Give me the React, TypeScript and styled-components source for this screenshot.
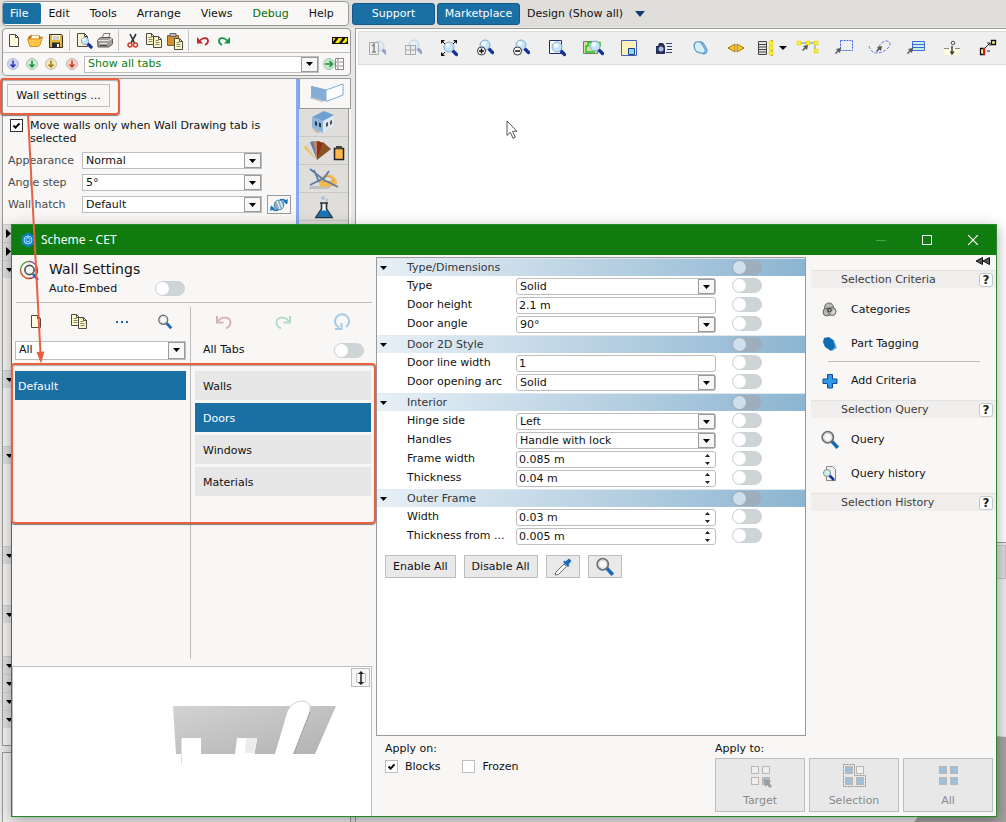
import React, { ReactNode, useId } from 'react';
import styled, { createGlobalStyle } from 'styled-components';

const blue = '#1a6fa5';
const orange = '#e8603f';
const surface = '#f8f7f6';
const line = '#bdbdbd';
const frame = '#9a9a9a';

const GlobalStyle = createGlobalStyle`
  * { box-sizing: border-box; }
  body {
    margin: 0;
    background: #e9e8e6;
    color: #111;
    font: 11px/14px "DejaVu Sans", Verdana, sans-serif;
  }
  button, input, select { font: inherit; color: inherit; margin: 0; padding: 0; border: 0; background: none; }
  svg { display: block; flex: none; }
`;

/* ---------- application shell ---------- */

const Shell = styled.div`
  position: relative;
  display: flex;
  flex-direction: column;
  min-height: 100vh;
  overflow: hidden;
`;

const TopBar = styled.header`
  display: flex;
  align-items: center;
  gap: 2px;
  height: 27px;
  padding-left: 2px;
  background: #dfdedb;
`;

const MenuBar = styled.nav`
  display: flex;
  width: 347px;
  height: 25px;
  margin-right: 1px;
  padding: 1px 0;
  border: 1px solid ${frame};
  border-radius: 4px;
  background: ${surface};
`;

const MenuItem = styled.button<{ $active?: boolean; $debug?: boolean }>`
  padding: 0 13px 0 7px;
  border-radius: 2px;
  background: ${p => (p.$active ? blue : 'transparent')};
  color: ${p => (p.$active ? '#fff' : p.$debug ? '#0a6b0a' : '#111')};
`;

const TopButton = styled.button`
  width: 83px;
  height: 22px;
  border: 1px solid #135a8a;
  border-radius: 3px;
  background: ${blue};
  color: #fff;
`;

const DesignPick = styled.button`
  display: flex;
  align-items: center;
  gap: 12px;
  margin-left: 5px;
`;

const Workspace = styled.main`
  flex: 1;
  display: grid;
  grid-template-columns: 349px 1fr;
  gap: 4px;
  padding: 1px 0 0 2px;
`;

const LeftColumn = styled.div`
  display: flex;
  flex-direction: column;
`;

const ToolPanel = styled.div`
  border: 1px solid ${frame};
  border-radius: 4px;
  background: ${surface};
`;

const ToolRow = styled.div<{ $divided?: boolean }>`
  display: flex;
  align-items: center;
  gap: 1px;
  height: 23px;
  padding: 0 2px 0 1px;
  border-top: ${p => (p.$divided ? `1px solid ${line}` : '0')};
`;

const ToolButton = styled.button<{ $w?: number }>`
  display: flex;
  align-items: center;
  justify-content: center;
  width: ${p => p.$w ?? 20}px;
  height: 20px;
`;

const ToolSeparator = styled.span`
  width: 1px;
  height: 21px;
  margin: 0 3px 0 2px;
  background: #c4c4c4;
`;

const Spring = styled.span`
  flex: 1;
`;

const Palette = styled.section`
  display: flex;
  height: 668px;
  margin-top: 2px;
  border: 1px solid ${frame};
  border-right: 0;
  background: ${surface};
`;

const PaletteBody = styled.div`
  flex: 1;
  display: flex;
  flex-direction: column;
  padding-top: 5px;
`;

const WallButton = styled.button`
  width: 103px;
  height: 23px;
  margin-left: 4px;
  border: 1px solid ${line};
  background: ${surface};
`;

const PaletteCheck = styled.div`
  margin: 12px 20px 7px 7px;
  line-height: 13px;
`;

const PaletteRow = styled.div`
  display: flex;
  align-items: center;
  height: 17px;
  margin: 0 0 5px 5px;
`;

const PaletteLabel = styled.label`
  width: 74px;
  color: #4a4a4a;
`;

const HatchButton = styled.button`
  display: flex;
  align-items: center;
  justify-content: center;
  width: 24px;
  height: 19px;
  margin-left: 5px;
  border: 1px solid ${frame};
`;

const Sections = styled.div`
  margin-top: 6px;
`;

const PaletteSection = styled.div<{ $h: number }>`
  height: ${p => p.$h}px;
`;

const SectionHead = styled.button`
  display: flex;
  align-items: center;
  width: 100%;
  height: 18px;
  padding-left: 3px;
  border-top: 1px solid #cfcfcf;
  background: #e2e1e0;
`;

const BlueEdge = styled.div`
  width: 3px;
  background: #84a9f5;
`;

const TabStrip = styled.div`
  width: 52px;
  display: flex;
  flex-direction: column;
  background: linear-gradient(90deg, #dfdedb 49px, ${frame} 49px, ${frame} 50px, ${surface} 50px);
`;

const StripTab = styled.button<{ $active?: boolean }>`
  display: flex;
  align-items: center;
  justify-content: center;
  height: ${p => (p.$active ? 30 : 28)}px;
  margin-right: ${p => (p.$active ? 0 : 3)}px;
  border: ${p => (p.$active ? `1px solid ${frame}` : '0')};
  border-top: 0;
  border-bottom: 1px solid ${p => (p.$active ? frame : '#c8c8c5')};
  background: ${p => (p.$active ? surface : 'transparent')};
`;

const BottomPanel = styled.div`
  flex: 1;
  margin-top: 6px;
  border: 1px solid ${frame};
  border-bottom: 0;
  background: #f4f4f3;
`;

const RightColumn = styled.div`
  display: flex;
  flex-direction: column;
  min-width: 0;
`;

const Viewport = styled.section`
  position: relative;
  flex: 1;
  padding: 2px 0 0 2px;
  border: solid ${frame};
  border-width: 1px 0 0 1px;
  background: #fff;
`;

const LowerViewport = styled.section`
  display: flex;
  flex-direction: column;
  height: 280px;
  border: solid ${frame};
  border-width: 1px 0 0 1px;
  background: #ececec;
`;

const ViewTools = styled.div`
  display: flex;
  align-items: center;
  height: 34px;
  border: 1px solid #dcdcdc;
  border-right: 0;
  background: #efefef;
  overflow: hidden;
`;

const LowerTools = styled.div`
  height: 34px;
  margin: 2px 0 0 2px;
  border: 1px solid #c4c4c4;
  background: #dcdcdc;
`;

const Floor = styled.svg`
  align-self: flex-end;
  margin-top: auto;
`;

const Pointer = styled.svg`
  position: absolute;
  left: 150px;
  top: 91px;
`;

/* ---------- shared controls ---------- */

const SelectFrame = styled.span<{ $h: number; $w?: number; $round?: boolean }>`
  position: relative;
  display: flex;
  flex: ${p => (p.$w ? 'none' : '1')};
  width: ${p => (p.$w ? `${p.$w}px` : 'auto')};
  height: ${p => p.$h}px;
  min-width: 0;
  border: 1px solid ${line};
  border-radius: ${p => (p.$round ? 3 : 0)}px;
  background: #fff;
`;

const NativeSelect = styled.select<{ $green?: boolean }>`
  flex: 1;
  min-width: 0;
  padding: 0 20px 0 3px;
  appearance: none;
  outline: none;
  color: ${p => (p.$green ? '#0b7d0b' : '#111')};
`;

const ArrowBox = styled.span`
  position: absolute;
  top: 0;
  right: 0;
  bottom: 0;
  display: flex;
  align-items: center;
  justify-content: center;
  width: 17px;
  border: 1px solid ${frame};
  background: ${surface};
  pointer-events: none;
`;

const Caret = ({ dir = 'down', color = '#000', w = 7, h = 4 }: { dir?: 'down' | 'right'; color?: string; w?: number; h?: number }) =>
  dir === 'down' ? (
    <svg width={w} height={h} viewBox="0 0 7 4" preserveAspectRatio="none"><path d="M0 0h7L3.500 4z" fill={color} /></svg>
  ) : (
    <svg width="5" height="9" viewBox="0 0 5 9"><path d="M0 0l5 4.500L0 9z" fill={color} /></svg>
  );

type PickProps = { id?: string; value: string; h?: number; w?: number; round?: boolean; green?: boolean; label?: string };
const Pick = ({ id, value, h = 17, w, round, green, label }: PickProps) => (
  <SelectFrame $h={h} $w={w} $round={round}>
    <NativeSelect id={id} $green={green} aria-label={label} defaultValue={value}>
      <option>{value}</option>
    </NativeSelect>
    <ArrowBox><Caret /></ArrowBox>
  </SelectFrame>
);

const CheckLabel = styled.label`
  display: flex;
  gap: 7px;
`;

const CheckFrame = styled.span`
  position: relative;
  width: 13px;
  height: 13px;
  flex: none;
  svg { position: absolute; left: 3px; top: 3px; display: none; pointer-events: none; }
  input:checked + svg { display: block; }
`;

const CheckInput = styled.input<{ $dark?: boolean }>`
  display: block;
  width: 13px;
  height: 13px;
  appearance: none;
  border: 1px solid ${p => (p.$dark ? '#333' : line)};
  background: #fff;
`;

const Check = ({ children, on, dark }: { children: ReactNode; on?: boolean; dark?: boolean }) => (
  <CheckLabel>
    <CheckFrame>
      <CheckInput type="checkbox" defaultChecked={on} $dark={dark} />
      <svg width="7" height="7" viewBox="0 0 7 7"><path d="M.5 3.500L2.600 5.600 6.500 1.300" fill="none" stroke="#000" strokeWidth="2" /></svg>
    </CheckFrame>
    <span>{children}</span>
  </CheckLabel>
);

const Toggle = styled.input.attrs({ type: 'checkbox', role: 'switch' })<{ $faded?: boolean }>`
  width: 30px;
  height: 15px;
  flex: none;
  appearance: none;
  border-radius: 8px;
  border: 1px solid ${p => (p.$faded ? 'transparent' : '#cdd2d5')};
  background: ${p => (p.$faded ? 'rgba(160, 170, 180, .75)' : '#cfd4d7')};
  &::before {
    content: '';
    display: block;
    width: 13px;
    height: 13px;
    border-radius: 50%;
    background: ${p => (p.$faded ? '#cfe0ec' : '#fff')};
  }
  &:checked::before { margin-left: 15px; }
`;

/* ---------- icons ---------- */

const Svg = ({ w = 18, h = 18, children, vb }: { w?: number; h?: number; children: ReactNode; vb?: string }) => (
  <svg width={w} height={h} viewBox={vb ?? `0 0 ${w} ${h}`} fill="none" aria-hidden="true">{children}</svg>
);

const Lens = ({ x = 9, y = 7, r = 5, faded }: { x?: number; y?: number; r?: number; faded?: boolean }) => (
  <g opacity={faded ? 0.4 : 1}>
    <path d={`M${x + r * 0.8} ${y + r * 0.8}L${x + r + 2.5} ${y + r + 2.5}`} stroke="#16309a" strokeWidth="3.200" strokeLinecap="round" />
    <circle cx={x} cy={y} r={r} fill="#c3e4fa" stroke="#8fabc9" />
    <circle cx={x - 1} cy={y - 1.5} r={r * 0.45} fill="#f2fbff" />
  </g>
);

const PageShape = ({ x, y, w = 9, h = 12, c = '#fdfbdf' }: { x: number; y: number; w?: number; h?: number; c?: string }) => (
  <path d={`M${x} ${y}h${w - 3}l3 3v${h - 3}h${-w}zM${x + w - 3} ${y}v3h3`} fill={c} stroke="#4c4a3e" />
);

const TextPage = ({ x, y }: { x: number; y: number }) => (
  <g>
    <PageShape x={x} y={y} w={8} h={11} c="#fbf7c8" />
    <path d={`M${x + 2} ${y + 4}h3M${x + 2} ${y + 6}h4M${x + 2} ${y + 8}h4`} stroke="#8c8867" />
  </g>
);

const NewIcon = () => <Svg><PageShape x={4.5} y={2.5} w={9} h={12} /></Svg>;
const CopyIcon = () => <Svg><TextPage x={1.5} y={1.5} /><TextPage x={8.5} y={4.5} /></Svg>;
const OpenIcon = () => (
  <Svg>
    <path d="M2 5l3-2h8l2 2v7l-3 2H4z" fill="#b9741a" />
    <path d="M1.500 7h12l3-2-2.500 8-2 1.500H4z" fill="#ffc64a" stroke="#d78f1d" />
    <path d="M6 3.500h7v3H5z" fill="#fdf6dd" />
  </Svg>
);
const SaveIcon = () => (
  <Svg>
    <path d="M2.500 2.500h12l1 1v12h-13z" fill="#dfb53c" stroke="#3d3217" />
    <path d="M5 3h8v5H5z" fill="#fbf8ea" /><path d="M6 5h6M6 7h6" stroke="#aaa" />
    <path d="M5 10.500h8v5H5z" fill="#2b2b33" /><path d="M10 12h2v3h-2z" fill="#fff" />
  </Svg>
);
const PreviewIcon = () => <Svg><PageShape x={2.5} y={1.5} w={10} h={13} c="#f8f4cd" /><Lens x={10} y={9} r={3.6} /></Svg>;
const PrintIcon = () => (
  <Svg>
    <path d="M6 6l2-4.500h6L12.500 6z" fill="#f2f2f2" stroke="#777" />
    <path d="M1.500 8l3-2.500h10l2 1.500v5L13 15H2z" fill="#a3a09b" stroke="#615e59" />
    <path d="M2 8.500h10.500l3.500-2M4 11.500h7" stroke="#e8e6e2" /><path d="M4 13.500h7" stroke="#4c4945" />
  </Svg>
);
const CutIcon = () => (
  <Svg>
    <path d="M6 2l4.500 9M12 2L7 11" stroke="#333" strokeWidth="1.600" />
    <circle cx="6" cy="13" r="2" stroke="#d23d2c" strokeWidth="1.500" /><circle cx="11.500" cy="13" r="2" stroke="#d23d2c" strokeWidth="1.500" />
  </Svg>
);
const PasteIcon = () => (
  <Svg>
    <path d="M1.500 3.500h11v10h-11z" fill="#d78f2c" stroke="#8a5a1a" /><path d="M4 1.500h6v3H4z" fill="#bbb" stroke="#666" />
    <TextPage x={8.5} y={6.5} />
  </Svg>
);
const UndoIcon = () => (
  <Svg w={14} h={12}>
    <path d="M4 5.500C7 2 12 2.500 12 6c0 2-1 3-3 4" stroke="#c0282d" strokeWidth="1.800" />
    <path d="M1 2v6.500h6z" fill="#c0282d" />
  </Svg>
);
const RedoIcon = () => (
  <Svg w={14} h={12}>
    <path d="M10 5.500C7 2 2 2.500 2 6c0 2 1 3 3 4" stroke="#159447" strokeWidth="1.800" />
    <path d="M13 2v6.500H7z" fill="#159447" />
  </Svg>
);
const SoftUndoIcon = () => (
  <Svg><path d="M3.500 8C6 3 15.500 3.500 15.500 9.500c0 3-1.500 4.500-4.500 6" stroke="#d8b0b2" strokeWidth="1.800" /><path d="M2 3v6.500h6.500" stroke="#d8b0b2" strokeWidth="2" /></Svg>
);
const SoftRedoIcon = () => (
  <Svg><path d="M14.500 8C12 3 2.500 3.500 2.500 9.500c0 3 1.500 4.500 4.500 6" stroke="#b0dcc3" strokeWidth="1.800" /><path d="M16 3v6.500H9.500" stroke="#b0dcc3" strokeWidth="2" /></Svg>
);
const ResetIcon = () => (
  <Svg>
    <path d="M6 14.500a7 7 0 1 1 7-.5" stroke="#a4cae8" strokeWidth="2" /><path d="M2 16h6.500V10" stroke="#a4cae8" strokeWidth="2" />
  </Svg>
);
const HazardIcon = () => (
  <Svg w={16} h={7}>
    <path d="M0 0h16v7H0z" fill="#111" /><path d="M3 6l3.500-5h4L7 6zM10 6l3.500-5H15v3l-1.500 2zM1 1h2.500L1 5z" fill="#ffe600" />
  </Svg>
);
const DownBall = ({ c, l }: { c: string; l: string }) => (
  <Svg w={14} h={14}>
    <circle cx="7" cy="7" r="5.500" fill={l} stroke="#bbb" />
    <path d="M7 3.500v6M4.500 7.500L7 10l2.500-2.500" stroke={c} strokeWidth="1.500" />
  </Svg>
);
const ListGoIcon = () => (
  <Svg w={22} h={14}>
    <circle cx="6" cy="7" r="5.500" fill="#c4ebcc" stroke="#a9c9b0" /><path d="M2 7h7M6.500 4L9.500 7l-3 3" stroke="#268c3c" strokeWidth="1.500" />
    <path d="M12.500 1.500h8v11h-8zM12.500 5h8M12.500 9h8" fill="#fff" stroke="#8088a8" /><path d="M14 3h2M14 7h2M14 11h2" stroke="#e0642c" />
  </Svg>
);
const MagIcon = ({ size = 18 }: { size?: number }) => (
  <Svg w={size} h={size} vb="0 0 18 18">
    <path d="M10.500 10l5.500 6" stroke="#1a68b8" strokeWidth="3.200" />
    <circle cx="7" cy="6.500" r="5" fill="#fbfbfb" stroke="#6c6f73" strokeWidth="1.600" />
    <circle cx="7" cy="6.500" r="3.500" stroke="#d6d9db" />
  </Svg>
);
const RingIcon = () => (
  <Svg w={22} h={22}>
    <path d="M10 1.500a8.500 8.500 0 0 1 8.500 8.500" stroke="#8a4b9c" strokeWidth="1.500" />
    <path d="M18.500 10a8.500 8.500 0 0 1-8.500 8.500" stroke="#b5304a" strokeWidth="1.500" />
    <path d="M10 18.500A8.500 8.500 0 0 1 1.500 10" stroke="#d3562f" strokeWidth="1.500" />
    <path d="M1.500 10A8.500 8.500 0 0 1 10 1.500" stroke="#5d9e45" strokeWidth="1.500" />
    <path d="M14 14l5 6" stroke="#1a68b8" strokeWidth="2.500" />
    <circle cx="10.500" cy="10" r="4.600" fill="#f4f4f4" stroke="#55585c" strokeWidth="1.700" />
  </Svg>
);
const LogoIcon = () => (
  <Svg w={14} h={16}>
    <path d="M7 .5l6.500 3.700v7.600L7 15.500.5 11.800V4.200z" fill="#0d7fc6" />
    <circle cx="7" cy="8" r="4" stroke="#a9dcf7" /><path d="M7 4v3M7 9l-3 2M7 9l3 2M5 6.500l2-1 2 1v2.500l-2 1-2-1z" stroke="#a9dcf7" strokeWidth=".8" />
  </Svg>
);
const HatchIcon = () => (
  <Svg w={20} h={16}>
    <circle cx="10" cy="8" r="4.800" fill="#8ab0cc" stroke="#5a7e98" /><path d="M8 4l3 8M11 3.500l2.500 7" stroke="#e4eef5" strokeWidth="1.300" />
    <path d="M2 10c1 3 4 4 7 3M18 6c-1-3-4-4-7-3" stroke="#1777be" strokeWidth="1.800" />
    <path d="M1 14l1-5.500 4 3zM19 2l-1 5.500-4-3z" fill="#1777be" />
  </Svg>
);
const WallIcon = () => (
  <Svg w={38} h={22}>
    <path d="M3 15l6-3 10 6-3 1z" fill="#c2c2c2" />
    <path d="M5 3l15 4v11L5 14z" fill="#86add6" /><path d="M5.500 3.500L20 7l17-6v11l-17 6.500V7" fill="#fff" stroke="#7fa9d2" />
    <path d="M5 3l15 4v11L5 14z" fill="#86add6" />
  </Svg>
);
const HouseIcon = () => (
  <Svg w={30} h={26}>
    <path d="M2 17l6 6 14-4z" fill="#b5b5b5" />
    <path d="M3 7l12-6 10 4v11l-11 7-11-6z" fill="#dce9f5" /><path d="M3 7l12-6 10 4-11 6z" fill="#6f9fcf" />
    <path d="M3 7l11 4v12L3 17z" fill="#8fb4da" />
    <path d="M6 11l2 1v4l-2-1zM10 12.500l2 1v4l-2-1z" fill="#33383f" /><path d="M17 13l2-1v4l-2 1zM21 11l2-1v4l-2 1z" fill="#555" />
  </Svg>
);
const SwatchIcon = () => (
  <Svg w={42} h={22}>
    <path d="M14 20L0 8l3-3z" fill="#e3c77a" /><path d="M14 20L3 5l4-3z" fill="#d9d9dc" /><path d="M14 20L7 2l4-1z" fill="#667aa6" />
    <path d="M14 20L10 1h7z" fill="#b08a6a" /><path d="M14 20L14 1l7 2z" fill="#9a2a18" /><path d="M14 20L20 2l8 7z" fill="#8a5326" />
    <path d="M31.500 8.500h9v11h-9z" fill="#ffb648" stroke="#222" strokeWidth="1.500" /><path d="M33 6h6v3h-6z" fill="#444" />
  </Svg>
);
const DraftIcon = () => (
  <Svg w={32} h={22}>
    <path d="M2 18h22l-4 3H1z" fill="#bfbfbd" />
    <path d="M11 16a9 9 0 1 1 18-1l-1 3-15 1z" fill="#f2b950" /><path d="M15 14a5 5 0 0 1 10-1z" fill="#dfdedb" stroke="#d69b33" />
    <path d="M2 1l14 11 14 7M2 17l14-7 5-7M6 2l5 12" stroke="#5d7bab" strokeWidth="1.800" />
  </Svg>
);
const FlaskIcon = () => (
  <Svg w={20} h={24}>
    <circle cx="9" cy="3" r="2" fill="#b3c3d6" /><circle cx="13" cy="5" r="1.500" fill="#b3c3d6" />
    <path d="M6 8h8M7.500 8v6L2 22.500h16L12.500 14V8" fill="#eef2f5" stroke="#2b3138" strokeWidth="1.600" />
    <path d="M6.500 15.500h7L17 22H3z" fill="#1b74b8" />
  </Svg>
);
const ArrowTip = ({ x = 0, y = 0 }: { x?: number; y?: number }) => (
  <path transform={`translate(${x} ${y})`} d="M6 0L1 1l1.500 1.500L0 5l1 1 2.500-2.500L5 5z" fill="#555" />
);

const viewIcons: { name: string; node: ReactNode }[] = [
  { name: 'Zoom one to one', node: <Svg><Lens x={11} y={7} faded /><path d="M1.500 3.500h9v12h-9z" fill="#eee" fillOpacity=".7" stroke="#aaa" /><path d="M4 7l2-2v8M4 13h4" stroke="#888" strokeWidth="1.500" /></Svg> },
  { name: 'Zoom page', node: <Svg><Lens x={10} y={6} faded /><path d="M1.500 6.500h10v9h-10zM6.500 6.500v9M1.500 11h10" fill="#eee" fillOpacity=".4" stroke="#aaa" /></Svg> },
  { name: 'Zoom extents', node: <Svg><path d="M1 5V1h4zM13 1h4v4zM1 13v4h4z" fill="#111" /><path d="M2 2l3 3M16 2l-3 3M2 16l3-3" stroke="#111" /><Lens x={9} y={8} /></Svg> },
  { name: 'Zoom in', node: <Svg><Lens x={9} y={6} /><circle cx="5.500" cy="12" r="4" fill="#fff" stroke="#333" /><path d="M3 12h5M5.500 9.500v5" stroke="#111" strokeWidth="1.500" /></Svg> },
  { name: 'Zoom out', node: <Svg><Lens x={9} y={6} /><circle cx="5.500" cy="12" r="4" fill="#fff" stroke="#333" /><path d="M3 12h5" stroke="#111" strokeWidth="1.500" /></Svg> },
  { name: 'Zoom window', node: <Svg><path d="M1.500 1.500h12v13h-12z" fill="#fbfbfb" stroke="#1f2b6c" /><Lens x={9} y={8} /></Svg> },
  { name: 'Zoom drawing', node: <Svg w={22}><path d="M1.500 2.500h14v12h-14z" fill="#dcd9b0" stroke="#777" /><path d="M6 3v4h-2v6h9M6 3.500h12V8" stroke="#12d112" strokeWidth="1.500" /><Lens x={13} y={7} /></Svg> },
  { name: 'Sheet', node: <Svg><path d="M1.500 1.500h15v15h-15z" fill="#fdf1bd" stroke="#3f62b8" /><path d="M8.500 9.500h6v6h-6z" fill="#8fd6f7" stroke="#1c3f86" /></Svg> },
  { name: 'Camera list', node: <Svg><path d="M1 7h2l1-3h4l2 3v8H1z" fill="#2a2f55" /><circle cx="6" cy="10" r="2.500" fill="#9fc0e8" /><path d="M11 4.500h6M12 7.500h5M12 10.500h5M11 13.500h6" stroke="#31437e" /></Svg> },
  { name: 'Tag', node: <Svg><path d="M5 3c3-1 5 0 6 2l3 5c1 3-1 5-4 4l-4-1C3 11 2 5 5 3z" fill="#d9edf8" stroke="#5ba0cc" strokeWidth="1.300" /><path d="M9 3c3 0 4 2 5 4l2 4c0 3-2 4-4 4" stroke="#5ba0cc" strokeWidth="1.300" /></Svg> },
  { name: 'Flip', node: <Svg><path d="M8 5v8L1 9zM10 5v8l7-4z" fill="#f7c915" stroke="#a67a10" /></Svg> },
  { name: 'Layers', node: <Svg w={30}><path d="M1.500 2.500h8v13h-8zM1.500 5.500h8M1.500 8h8M1.500 10.500h8M1.500 13h8" fill="#e2e2e2" stroke="#444" /><path d="M15 1v16" stroke="#333" strokeDasharray="2 1" /><path d="M12.500 2.500h3v3h-3zM12.500 7.500h3v3h-3zM12.500 12.500h3v3h-3z" fill="#fffbb0" stroke="#f0dc10" strokeWidth="1.500" /><path d="M22 7h8l-4 4z" fill="#000" /></Svg> },
  { name: 'Select path', node: <Svg w={24}><path d="M2 4h20M19 4v9" stroke="#6f8cc4" /><path d="M1.500 2.500h3v3h-3zM10.500 2.500h3v3h-3zM18.500 2.500h3v3h-3zM18.500 10.500h3v3h-3z" fill="#fffbb0" stroke="#f0dc10" strokeWidth="1.500" /><ArrowTip x={6} y={6} /></Svg> },
  { name: 'Select area', node: <Svg w={20}><path d="M6.500 1.500h12v10h-12z" stroke="#4167e0" strokeDasharray="2 1" /><ArrowTip x={1} y={9} /></Svg> },
  { name: 'Select lasso', node: <Svg w={24}><path d="M1 7c2 9 12 9 19 2 5-5 0-9-5-6-3 2-6 6-5 9" stroke="#5d7ddc" strokeDasharray="3 1.500" /><ArrowTip x={8} y={7} /></Svg> },
  { name: 'Select rows', node: <Svg w={20}><path d="M6.500 2.500h12v9h-12zM6.500 5.500h12M6.500 8.500h12" fill="#c9f0dc" stroke="#4167e0" /><ArrowTip x={1} y={9} /></Svg> },
  { name: 'Split', node: <Svg><path d="M1 9h16v7H1z" fill="#fffde0" /><path d="M1 9.500h5M12 9.500h5" stroke="#888" /><path d="M9 7v8M7.500 12.500L9 15l2-2.500" stroke="#444" strokeWidth="1.500" /><circle cx="10" cy="4" r="1.800" stroke="#555" /></Svg> },
  { name: 'Connect', node: <Svg><path d="M12.500 1.500h4v4h-4z" fill="#fff59a" stroke="#111" strokeWidth="1.300" /><path d="M1.500 9.500h4v6h-4z" fill="#fff59a" stroke="#111" strokeWidth="1.300" /><path d="M4 9h2v7H4z" fill="#d3121a" /><path d="M6 9l5-5M8 4h3v3M8 12h3" stroke="#222" /></Svg> },
];

const DropperIcon = () => (
  <Svg w={20} h={20}>
    <path d="M2 18l1-3 8-8 2.500 2.500-8 8z" fill="#eef4f8" stroke="#6b7075" /><path d="M10 5l5 5 1.500-1.500-1-1L18.500 4 16 1.500l-3.500 3-1-1z" fill="#1a68b8" />
  </Svg>
);
const CategoriesIcon = () => (
  <Svg w={16} h={16}>
    <circle cx="7" cy="5.500" r="4.500" fill="#b9b9b6" stroke="#666" /><circle cx="5" cy="10" r="4" fill="#a9a9a6" fillOpacity=".8" stroke="#666" />
    <circle cx="10" cy="9.500" r="4" fill="#bfbfbc" fillOpacity=".7" stroke="#666" /><circle cx="7.500" cy="8" r="1.800" stroke="#333" />
  </Svg>
);
const TaggingIcon = () => (
  <Svg w={16} h={16}>
    <path d="M6 2l6 2 3 8-5 3z" fill="#6fb0dc" /><path d="M2 2l5-1 4 3 2 7-4 4-6-4-2-5z" fill="#0f6cb0" />
  </Svg>
);
const PlusIcon = () => <Svg w={16} h={16}><path d="M5.500 1.500h5V6H15v4.500h-4.500V15h-5v-4.500H1V6h4.500z" fill="#2f9be8" stroke="#1447a0" /></Svg>;
const HistoryIcon = () => (
  <Svg w={18} h={18}>
    <path d="M5.500 1.500h6l3 3v11h-9z" fill="#f2f2f2" stroke="#888" /><path d="M8 10l5 5" stroke="#16309a" strokeWidth="2.500" />
    <circle cx="6" cy="8" r="3.500" fill="#c9f2f5" stroke="#888" />
  </Svg>
);
const ResizeIcon = () => (
  <Svg w={14} h={16}>
    <path d="M2.500 3.500h9v9h-9z" fill="#f6f6f6" stroke="#c4c4c4" /><path d="M7 2v12" stroke="#222" strokeWidth="1.500" />
    <path d="M4 4l3-3 3 3zM4 12l3 3 3-3z" fill="#222" />
  </Svg>
);
const SpinMarks = () => <Svg w={5} h={11}><path d="M0 3L2.500 0 5 3zM0 8l2.500 3L5 8z" fill="#222" /></Svg>;
const ApplyIcon = ({ kind }: { kind: 'target' | 'selection' | 'all' }) => {
  const filled = { target: [0, 0, 0, 1], selection: [1, 0, 1, 1], all: [1, 1, 1, 1] }[kind];
  return (
    <Svg w={26} h={26}>
      {kind === 'selection' && <path d="M2.500 2.500h11v11h11v11h-22z" stroke="#8f8f8f" strokeDasharray="2 1" />}
      {filled.map((f, i) => (
        <rect key={i} x={4.5 + (i % 2) * 11} y={4.5 + (i > 1 ? 11 : 0)} width="7" height="7" fill={f ? '#a0c0da' : '#efefef'} stroke="#b9b6b3" />
      ))}
      {kind === 'target' && <path d="M17 17l7 2-2 2 3 3-2 2-3-3-2 2z" fill="#9c9c9c" />}
    </Svg>
  );
};

/* ---------- dialog ---------- */

const Dialog = styled.div`
  position: absolute;
  top: 224px;
  right: 9px;
  bottom: 5px;
  left: 11px;
  min-height: 593px;
  display: flex;
  flex-direction: column;
  border: 1px solid #26882a;
  background: ${surface};
  box-shadow: 0 4px 14px rgba(0, 0, 0, .35);
`;

const TitleBar = styled.header`
  display: flex;
  align-items: center;
  height: 30px;
  padding-left: 9px;
  background: #107c10;
  color: #fff;
`;

const DialogTitle = styled.h1`
  flex: 1;
  margin: 0 0 0 6px;
  font: 12px/16px "Noto Sans", "Open Sans", sans-serif;
`;

const WindowButton = styled.button`
  display: flex;
  align-items: center;
  justify-content: center;
  width: 46px;
  height: 30px;
`;

const DialogBody = styled.div`
  flex: 1;
  display: flex;
  min-height: 0;
`;

const SchemePane = styled.section`
  display: flex;
  flex-direction: column;
  width: 364px;
  padding-right: 4px;
`;

const SchemeHead = styled.div`
  display: flex;
  gap: 8px;
  height: 48px;
  margin-left: 4px;
  padding: 5px 0 0 3px;
  border-bottom: 1px solid ${line};
`;

const SchemeTitle = styled.h2`
  margin: 1px 0 4px;
  font-size: 14px;
  line-height: 16px;
  font-weight: 400;
`;

const ToggleLine = styled.label<{ $w?: number }>`
  display: flex;
  align-items: center;
  justify-content: space-between;
  width: ${p => (p.$w ? `${p.$w}px` : 'auto')};
`;

const Columns = styled.div`
  flex: 1;
  display: grid;
  grid-template-columns: 179px 1fr;
  padding: 4px 1px 7px 0;
`;

const Column = styled.div<{ $ruled?: boolean }>`
  padding: 0 ${p => (p.$ruled ? 4 : 0)}px 0 ${p => (p.$ruled ? 3 : 4)}px;
  border-right: ${p => (p.$ruled ? `1px solid ${line}` : '0')};
`;

const IconRow = styled.div`
  display: flex;
  height: 33px;
  > button { flex: 1; height: 30px; }
`;

const FilterRow = styled.div<{ $inset?: boolean }>`
  display: flex;
  align-items: center;
  height: 20px;
  margin-bottom: 11px;
  padding: ${p => (p.$inset ? '0 7px 0 8px' : '0')};
  > label { flex: 1; }
`;

const List = styled.ul`
  display: flex;
  flex-direction: column;
  gap: 3px;
  margin: 0;
  padding: 0;
  list-style: none;
`;

const ListButton = styled.button<{ $active?: boolean; $inset: number }>`
  display: block;
  width: 100%;
  height: 29px;
  padding: 2px 0 0 ${p => p.$inset}px;
  text-align: left;
  background: ${p => (p.$active ? blue : '#e7e7e7')};
  color: ${p => (p.$active ? '#fff' : '#111')};
`;

const Preview = styled.div`
  display: flex;
  align-items: flex-start;
  justify-content: flex-end;
  height: 150px;
  padding: 1px;
  border: 1px solid ${line};
  border-bottom: 0;
  background: #fff;
`;

const SquareButton = styled.button`
  display: flex;
  align-items: center;
  justify-content: center;
  width: 19px;
  height: 19px;
  border: 1px solid ${line};
  background: ${surface};
`;

const MainPane = styled.div`
  flex: 1;
  display: flex;
  flex-direction: column;
  min-width: 0;
`;

const MainTop = styled.div`
  flex: 1;
  display: flex;
  gap: 5px;
  padding-top: 2px;
`;

const PropertyPanel = styled.section`
  flex: 1;
  border: 1px solid ${frame};
  background: #fff;
`;

const GroupHead = styled.div`
  display: flex;
  align-items: center;
  height: 18px;
  margin-bottom: 2px;
  padding: 0 43px 0 3px;
  border-top: 1px solid #dfe8ef;
  background: linear-gradient(90deg, #e8f0f6, #8cb5d1);
  color: #33373b;
`;

const GroupTitle = styled.button`
  flex: 1;
  display: flex;
  align-items: center;
  gap: 20px;
  text-align: left;
`;

const PropertyRow = styled.div`
  display: flex;
  align-items: flex-start;
  height: 19px;
  padding: 0 43px 0 30px;
`;

const PropertyLabel = styled.label`
  width: 109px;
  line-height: 15px;
  white-space: nowrap;
`;

const FieldSlot = styled.div`
  flex: 1;
  display: flex;
  margin-right: 16px;
`;

const TextField = styled.span`
  flex: 1;
  display: flex;
  align-items: center;
  height: 17px;
  padding: 0 5px 0 2px;
  border: 1px solid ${line};
  border-radius: 3px;
  background: #fff;
  input { flex: 1; min-width: 0; height: 15px; outline: none; }
`;

const Actions = styled.div`
  display: flex;
  gap: 8px;
  padding: 8px;
`;

const ActionButton = styled.button<{ $icon?: boolean }>`
  display: flex;
  align-items: center;
  justify-content: center;
  height: 23px;
  padding: 0 ${p => (p.$icon ? 6 : 7)}px;
  border: 1px solid ${line};
  background: #e9e9e9;
`;

const Sidebar = styled.aside`
  width: 185px;
`;

const CollapseButton = styled.button`
  display: flex;
  justify-content: flex-end;
  width: 100%;
  height: 13px;
  padding-right: 6px;
`;

const SideHead = styled.h3`
  display: flex;
  align-items: center;
  justify-content: space-between;
  height: 18px;
  margin: 0;
  padding: 0 3px 0 30px;
  border-top: 1px solid #e3e3e3;
  background: #efeeed;
  color: #3c3c3c;
  font-size: 11px;
  font-weight: 400;
`;

const HelpButton = styled.button`
  width: 14px;
  height: 14px;
  border: 1px solid #c6c6c6;
  border-radius: 3px;
  background: #fff;
  color: #222;
  font-size: 12px;
  font-weight: 700;
  line-height: 12px;
`;

const SideList = styled.div`
  padding: 5px 0 2px;
`;

const SideItem = styled.button`
  display: flex;
  align-items: center;
  gap: 13px;
  width: 100%;
  height: 34px;
  padding-left: 11px;
`;

const SideIcon = styled.span`
  display: flex;
  justify-content: center;
  width: 16px;
`;

const SideRule = styled.hr`
  margin: 0 16px 2px 17px;
  border: 0;
  border-top: 1px solid ${line};
`;

const Footer = styled.footer`
  display: flex;
  justify-content: space-between;
  height: 80px;
  padding: 6px 3px 4px 9px;
`;

const CheckRow = styled.div`
  display: flex;
  gap: 22px;
  margin-top: 4px;
`;

const ApplyRow = styled.div`
  display: flex;
  gap: 4px;
  margin-top: 2px;
`;

const ApplyButton = styled.button`
  display: flex;
  flex-direction: column;
  align-items: center;
  justify-content: space-between;
  width: 90px;
  height: 54px;
  padding: 3px 0;
  border: 1px solid ${line};
  background: #e8e8e8;
  color: #8a8a8a;
`;

/* ---------- annotation over the screens ---------- */

const Callout = styled.div<{ $x: number; $y: number; $w: number; $h: number }>`
  position: absolute;
  left: ${p => p.$x}px;
  top: ${p => p.$y}px;
  width: ${p => p.$w}px;
  height: ${p => p.$h}px;
  border: 2px solid ${orange};
  border-radius: 4px;
  box-shadow: 0 1px 1px rgba(0, 0, 0, .5), inset 0 1px 1px rgba(0, 0, 0, .3);
  pointer-events: none;
`;

const CalloutArrow = styled.svg`
  position: absolute;
  left: 20px;
  top: 115px;
  pointer-events: none;
`;

type Kind = 'select' | 'text' | 'number';
const groups: { title: string; rows: [string, string, Kind][] }[] = [
  { title: 'Type/Dimensions', rows: [['Type', 'Solid', 'select'], ['Door height', '2.1 m', 'text'], ['Door angle', '90°', 'select']] },
  { title: 'Door 2D Style', rows: [['Door line width', '1', 'text'], ['Door opening arc', 'Solid', 'select']] },
  { title: 'Interior', rows: [['Hinge side', 'Left', 'select'], ['Handles', 'Handle with lock', 'select'], ['Frame width', '0.085 m', 'number'], ['Thickness', '0.04 m', 'number']] },
  { title: 'Outer Frame', rows: [['Width', '0.03 m', 'number'], ['Thickness from ...', '0.005 m', 'number']] },
];

const Property = ({ label, value, kind }: { label: string; value: string; kind: Kind }) => {
  const id = useId();
  return (
    <PropertyRow>
      <PropertyLabel htmlFor={id}>{label}</PropertyLabel>
      <FieldSlot>
        {kind === 'select' ? (
          <Pick id={id} value={value} round />
        ) : (
          <TextField><input id={id} defaultValue={value} />{kind === 'number' && <SpinMarks />}</TextField>
        )}
      </FieldSlot>
      <Toggle aria-label={`Override ${label}`} />
    </PropertyRow>
  );
};

const PalettePick = ({ label, value, children }: { label: string; value: string; children?: ReactNode }) => {
  const id = useId();
  return (
    <PaletteRow>
      <PaletteLabel htmlFor={id}>{label}</PaletteLabel>
      <Pick id={id} value={value} w={180} />
      {children}
    </PaletteRow>
  );
};

const SideHeading = ({ children }: { children: string }) => (
  <SideHead>{children}<HelpButton aria-label={`Help on ${children}`}>?</HelpButton></SideHead>
);

const SideLink = ({ icon, children }: { icon: ReactNode; children: string }) => (
  <SideItem><SideIcon>{icon}</SideIcon>{children}</SideItem>
);

const sections: [boolean, number][] = [
  [false, 18], [false, 18], [true, 110], [true, 76], [true, 100], [true, 59], [true, 51],
  [true, 18], [true, 18], [true, 18], [true, 18],
];

const AppWindow = () => (
  <>
    <TopBar>
      <MenuBar>
        <MenuItem $active>File</MenuItem>
        <MenuItem>Edit</MenuItem>
        <MenuItem>Tools</MenuItem>
        <MenuItem>Arrange</MenuItem>
        <MenuItem>Views</MenuItem>
        <MenuItem $debug>Debug</MenuItem>
        <MenuItem>Help</MenuItem>
      </MenuBar>
      <TopButton>Support</TopButton>
      <TopButton>Marketplace</TopButton>
      <DesignPick>Design (Show all)<Caret color="#173a75" w={10} h={6} /></DesignPick>
    </TopBar>
    <Workspace>
      <LeftColumn>
        <ToolPanel>
          <ToolRow>
            <ToolButton aria-label="New"><NewIcon /></ToolButton>
            <ToolButton aria-label="Open"><OpenIcon /></ToolButton>
            <ToolButton aria-label="Save"><SaveIcon /></ToolButton>
            <ToolSeparator />
            <ToolButton aria-label="Preview"><PreviewIcon /></ToolButton>
            <ToolButton aria-label="Print"><PrintIcon /></ToolButton>
            <ToolSeparator />
            <ToolButton aria-label="Cut"><CutIcon /></ToolButton>
            <ToolButton aria-label="Copy"><CopyIcon /></ToolButton>
            <ToolButton aria-label="Paste"><PasteIcon /></ToolButton>
            <ToolSeparator />
            <ToolButton aria-label="Undo"><UndoIcon /></ToolButton>
            <ToolButton aria-label="Redo"><RedoIcon /></ToolButton>
            <Spring />
            <HazardIcon />
          </ToolRow>
          <ToolRow $divided>
            <ToolButton $w={18} aria-label="Load blue"><DownBall c="#2a36b8" l="#cdd4f8" /></ToolButton>
            <ToolButton $w={18} aria-label="Load green"><DownBall c="#1d8a3c" l="#c9efd0" /></ToolButton>
            <ToolButton $w={18} aria-label="Load yellow"><DownBall c="#9a7a1c" l="#f6e9b4" /></ToolButton>
            <ToolButton $w={22} aria-label="Load red"><DownBall c="#c23a24" l="#f8cfc4" /></ToolButton>
            <Pick value="Show all tabs" label="Tabs" green />
            <ToolButton $w={28} aria-label="List tabs"><ListGoIcon /></ToolButton>
          </ToolRow>
        </ToolPanel>
        <Palette>
          <PaletteBody>
            <WallButton>Wall settings ...</WallButton>
            <PaletteCheck><Check on dark>Move walls only when Wall Drawing tab is selected</Check></PaletteCheck>
            <PalettePick label="Appearance" value="Normal" />
            <PalettePick label="Angle step" value="5°" />
            <PalettePick label="Wall hatch" value="Default">
              <HatchButton aria-label="Swap hatch"><HatchIcon /></HatchButton>
            </PalettePick>
            <Sections>
              {sections.map(([open, h], i) => (
                <PaletteSection key={i} $h={h}>
                  <SectionHead aria-label={`Section ${i + 1}`}><Caret dir={open ? 'down' : 'right'} /></SectionHead>
                </PaletteSection>
              ))}
            </Sections>
          </PaletteBody>
          <BlueEdge />
          <TabStrip>
            <StripTab $active aria-label="Walls"><WallIcon /></StripTab>
            <StripTab aria-label="Building"><HouseIcon /></StripTab>
            <StripTab aria-label="Materials"><SwatchIcon /></StripTab>
            <StripTab aria-label="Drafting"><DraftIcon /></StripTab>
            <StripTab aria-label="Lab"><FlaskIcon /></StripTab>
          </TabStrip>
        </Palette>
        <BottomPanel />
      </LeftColumn>
      <RightColumn>
        <Viewport>
          <ViewTools>
            {viewIcons.map(i => <ToolButton key={i.name} $w={36} aria-label={i.name}>{i.node}</ToolButton>)}
          </ViewTools>
          <Pointer width="12" height="20" viewBox="0 0 12 20">
            <path d="M1 1v14.500l3.300-3.200 2.700 6 2.300-1-2.700-6H11z" fill="#fff" stroke="#555" />
          </Pointer>
        </Viewport>
        <LowerViewport>
          <LowerTools />
          <Floor width="92" height="87" viewBox="0 0 92 87"><path d="M0 87L70 0l22 2v85z" fill="#a3a39f" /></Floor>
        </LowerViewport>
      </RightColumn>
    </Workspace>
  </>
);

const SchemeDialog = () => (
  <Dialog role="dialog" aria-label="Scheme - CET">
    <TitleBar>
      <LogoIcon />
      <DialogTitle>Scheme - CET</DialogTitle>
      <WindowButton aria-label="Minimize"><Svg w={10} h={10}><path d="M0 5.500h10" stroke="#4f9f4f" /></Svg></WindowButton>
      <WindowButton aria-label="Maximize"><Svg w={10} h={10}><path d="M.5.5h9v9h-9z" stroke="#fff" /></Svg></WindowButton>
      <WindowButton aria-label="Close"><Svg w={10} h={10}><path d="M0 0l10 10M10 0L0 10" stroke="#fff" strokeWidth="1.200" /></Svg></WindowButton>
    </TitleBar>
    <DialogBody>
      <SchemePane>
        <SchemeHead>
          <RingIcon />
          <div>
            <SchemeTitle>Wall Settings</SchemeTitle>
            <ToggleLine $w={136}>Auto-Embed<Toggle /></ToggleLine>
          </div>
        </SchemeHead>
        <Columns>
          <Column $ruled>
            <IconRow>
              <ToolButton aria-label="New scheme"><NewIcon /></ToolButton>
              <ToolButton aria-label="Duplicate"><CopyIcon /></ToolButton>
              <ToolButton aria-label="More"><Svg w={12} h={2}><path d="M0 0h2v2H0zM5 0h2v2H5zM10 0h2v2h-2z" fill="#1a68a8" /></Svg></ToolButton>
              <ToolButton aria-label="Find"><MagIcon size={16} /></ToolButton>
            </IconRow>
            <FilterRow><Pick value="All" label="Filter" h={19} /></FilterRow>
            <List><li><ListButton $active $inset={3}>Default</ListButton></li></List>
          </Column>
          <Column>
            <IconRow>
              <ToolButton aria-label="Undo"><SoftUndoIcon /></ToolButton>
              <ToolButton aria-label="Redo"><SoftRedoIcon /></ToolButton>
              <ToolButton aria-label="Reset"><ResetIcon /></ToolButton>
            </IconRow>
            <FilterRow $inset><ToggleLine>All Tabs<Toggle /></ToggleLine></FilterRow>
            <List>
              {['Walls', 'Doors', 'Windows', 'Materials'].map(n => (
                <li key={n}><ListButton $active={n === 'Doors'} $inset={8}>{n}</ListButton></li>
              ))}
            </List>
          </Column>
        </Columns>
        <Preview>
          <Svg w={178} h={140}>
            <defs>
              <linearGradient id="wallShade" x1="0" y1="0" x2="1" y2="1">
                <stop offset="0" stopColor="#d2d2d2" /><stop offset="1" stopColor="#b2b2b2" />
              </linearGradient>
            </defs>
            <path d="M0 38h163l-21 48H3z" fill="url(#wallShade)" />
            <path d="M102 86l12-41c3-8 10-12 16-12 7 0 8 6 6 12l-16 41z" fill="#fff" />
            <path d="M114 43c4-7 10-10 16-10 6 0 8 5 7 11" stroke="#cfcfcf" />
            <path d="M137 44l-16 42" stroke="#9d9d9d" strokeDasharray="3 1" />
            <path d="M8 70h20v16H8z" fill="#fff" /><path d="M8.500 70v27" stroke="#e2e2e2" />
            <path d="M64 70h21l-3 16H62z" fill="#fff" /><path d="M73 70h11l-3 15h-9z" fill="#ececec" /><path d="M85 70l-3 16" stroke="#b4b4b4" />
          </Svg>
          <SquareButton aria-label="Resize preview"><ResizeIcon /></SquareButton>
        </Preview>
      </SchemePane>
      <MainPane>
        <MainTop>
          <PropertyPanel>
            {groups.map(g => (
              <div key={g.title}>
                <GroupHead>
                  <GroupTitle><Caret />{g.title}</GroupTitle>
                  <Toggle $faded aria-label={`Override ${g.title}`} />
                </GroupHead>
                {g.rows.map(([l, v, k]) => <Property key={l} label={l} value={v} kind={k} />)}
              </div>
            ))}
            <Actions>
              <ActionButton>Enable All</ActionButton>
              <ActionButton>Disable All</ActionButton>
              <ActionButton $icon aria-label="Pick"><DropperIcon /></ActionButton>
              <ActionButton $icon aria-label="Search"><MagIcon size={20} /></ActionButton>
            </Actions>
          </PropertyPanel>
          <Sidebar>
            <CollapseButton aria-label="Collapse">
              <Svg w={14} h={8}><path d="M6.500.5v7L0 4zM13.500.5v7L7 4z" fill="#555" stroke="#111" /></Svg>
            </CollapseButton>
            <SideHeading>Selection Criteria</SideHeading>
            <SideList>
              <SideLink icon={<CategoriesIcon />}>Categories</SideLink>
              <SideLink icon={<TaggingIcon />}>Part Tagging</SideLink>
              <SideRule />
              <SideLink icon={<PlusIcon />}>Add Criteria</SideLink>
            </SideList>
            <SideHeading>Selection Query</SideHeading>
            <SideList>
              <SideLink icon={<MagIcon size={20} />}>Query</SideLink>
              <SideLink icon={<HistoryIcon />}>Query history</SideLink>
            </SideList>
            <SideHeading>Selection History</SideHeading>
          </Sidebar>
        </MainTop>
        <Footer>
          <div>
            Apply on:
            <CheckRow><Check on>Blocks</Check><Check>Frozen</Check></CheckRow>
          </div>
          <div>
            Apply to:
            <ApplyRow>
              <ApplyButton disabled><ApplyIcon kind="target" />Target</ApplyButton>
              <ApplyButton disabled><ApplyIcon kind="selection" />Selection</ApplyButton>
              <ApplyButton disabled><ApplyIcon kind="all" />All</ApplyButton>
            </ApplyRow>
          </div>
        </Footer>
      </MainPane>
    </DialogBody>
  </Dialog>
);

export default function App() {
  return (
    <Shell>
      <GlobalStyle />
      <AppWindow />
      <SchemeDialog />
      <Callout $x={0} $y={78} $w={120} $h={37} />
      <Callout $x={11} $y={363} $w={365} $h={161} />
      <CalloutArrow width="30" height="250" viewBox="0 0 30 250" fill="none">
        <path d="M8 0l12.500 238" stroke={orange} strokeWidth="2" />
        <path d="M16.500 237l8-.5-3.500 12z" fill={orange} />
      </CalloutArrow>
    </Shell>
  );
}
